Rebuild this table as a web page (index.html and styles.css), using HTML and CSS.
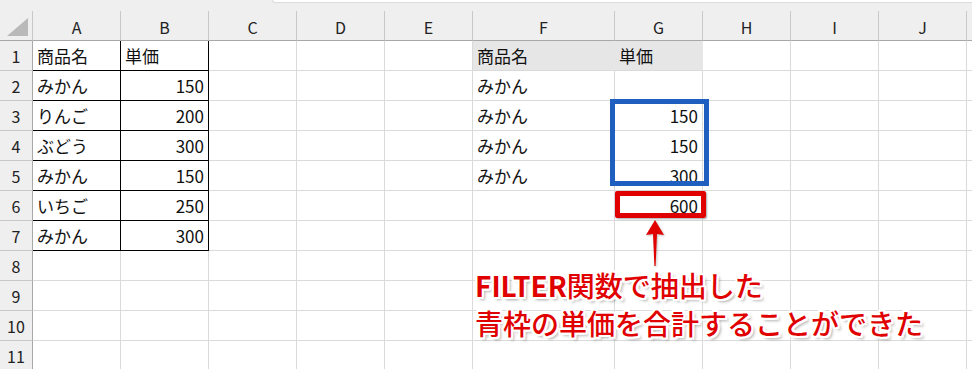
FILE: index.html
```html
<!DOCTYPE html>
<html lang="ja">
<head>
<meta charset="utf-8">
<title>FILTER</title>
<link rel="stylesheet" href="styles.css">
</head>
<body>
<div class="sheet">
  <div class="topbar"><div class="spacer"></div><div class="tab"></div></div>
  <div class="row head">
    <div class="corner"><span class="tri"></span></div>
    <div class="ch">A</div><div class="ch">B</div><div class="ch">C</div><div class="ch">D</div><div class="ch">E</div><div class="ch">F</div><div class="ch">G</div><div class="ch">H</div><div class="ch">I</div><div class="ch">J</div><div class="ch rest"></div>
  </div>
  <div class="row">
    <div class="rh">1</div>
    <div class="c t">商品名</div><div class="c t">単価</div><div class="c"></div><div class="c"></div><div class="c"></div><div class="c g">商品名</div><div class="c g">単価</div><div class="c"></div><div class="c"></div><div class="c"></div><div class="c"></div>
  </div>
  <div class="row">
    <div class="rh">2</div>
    <div class="c t">みかん</div><div class="c t n">150</div><div class="c"></div><div class="c"></div><div class="c"></div><div class="c">みかん</div><div class="c"></div><div class="c"></div><div class="c"></div><div class="c"></div><div class="c"></div>
  </div>
  <div class="row">
    <div class="rh">3</div>
    <div class="c t">りんご</div><div class="c t n">200</div><div class="c"></div><div class="c"></div><div class="c"></div><div class="c">みかん</div><div class="c n">150</div><div class="c"></div><div class="c"></div><div class="c"></div><div class="c"></div>
  </div>
  <div class="row">
    <div class="rh">4</div>
    <div class="c t">ぶどう</div><div class="c t n">300</div><div class="c"></div><div class="c"></div><div class="c"></div><div class="c">みかん</div><div class="c n">150</div><div class="c"></div><div class="c"></div><div class="c"></div><div class="c"></div>
  </div>
  <div class="row">
    <div class="rh">5</div>
    <div class="c t">みかん</div><div class="c t n">150</div><div class="c"></div><div class="c"></div><div class="c"></div><div class="c">みかん</div><div class="c n">300</div><div class="c"></div><div class="c"></div><div class="c"></div><div class="c"></div>
  </div>
  <div class="row">
    <div class="rh">6</div>
    <div class="c t">いちご</div><div class="c t n">250</div><div class="c"></div><div class="c"></div><div class="c"></div><div class="c"></div><div class="c n">600</div><div class="c"></div><div class="c"></div><div class="c"></div><div class="c"></div>
  </div>
  <div class="row">
    <div class="rh">7</div>
    <div class="c t">みかん</div><div class="c t n">300</div><div class="c"></div><div class="c"></div><div class="c"></div><div class="c"></div><div class="c"></div><div class="c"></div><div class="c"></div><div class="c"></div><div class="c"></div>
  </div>
  <div class="row">
    <div class="rh">8</div>
    <div class="c"></div><div class="c"></div><div class="c"></div><div class="c"></div><div class="c"></div><div class="c"></div><div class="c"></div><div class="c"></div><div class="c"></div><div class="c"></div><div class="c"></div>
  </div>
  <div class="row">
    <div class="rh">9</div>
    <div class="c"></div><div class="c"></div><div class="c"></div><div class="c"></div><div class="c"></div><div class="c"></div><div class="c"></div><div class="c"></div><div class="c"></div><div class="c"></div><div class="c"></div>
  </div>
  <div class="row">
    <div class="rh">10</div>
    <div class="c"></div><div class="c"></div><div class="c"></div><div class="c"></div><div class="c"></div><div class="c"></div><div class="c"></div><div class="c"></div><div class="c"></div><div class="c"></div><div class="c"></div>
  </div>
  <div class="row">
    <div class="rh">11</div>
    <div class="c"></div><div class="c"></div><div class="c"></div><div class="c"></div><div class="c"></div><div class="c"></div><div class="c"></div><div class="c"></div><div class="c"></div><div class="c"></div><div class="c"></div>
  </div>

  <div class="box-blue"></div>
  <div class="box-red"></div>
  <svg class="arrow" width="24" height="50" viewBox="0 0 24 50">
    <path d="M12 0 L21 15 L14 14 L12.6 46 L11.4 46 L10 14 L3 15 Z" fill="#e00000"/>
  </svg>
  <div class="note">
    <div class="line"><span class="en">FILTER</span>関数で抽出した</div>
    <div class="line">青枠の単価を合計することができた</div>
  </div>
</div>
</body>
</html>
```
FILE: styles.css
```css
* { box-sizing: border-box; }
html, body { margin: 0; padding: 0; }
body {
  background: #ffffff;
  font-family: "Noto Sans CJK JP", "Noto Sans", sans-serif;
  color: #111;
  overflow: hidden;
}
.sheet {
  position: relative;
  width: 972px;
  height: 369px;
  overflow: hidden;
}
.topbar {
  display: flex;
  height: 11px;
  background: #efefef;
}
.topbar .spacer { width: 272px; }
.topbar .tab {
  flex: 1;
  height: 3px;
  background: #ffffff;
  border: 1px solid #dcdcdc;
  border-top: none;
  border-right: none;
  border-bottom-left-radius: 4px;
}
.row {
  display: grid;
  grid-template-columns: 33px 88px 88px 88px 88px 88px 142px 88px 88px 88px 88px 1fr;
  height: 30px;
}
.head { background: #efefef; }
.corner {
  position: relative;
  border-right: 1px solid #c8c8c8;
  border-bottom: 1px solid #a8a8a8;
}
.tri {
  position: absolute;
  right: 4px;
  bottom: 4px;
  width: 0;
  height: 0;
  border-left: 21px solid transparent;
  border-bottom: 18px solid #b9b9b9;
}
.ch {
  border-right: 1px solid #c8c8c8;
  border-bottom: 1px solid #a8a8a8;
  font-size: 16px;
  color: #222;
  display: flex;
  align-items: center;
  justify-content: center;
  padding-top: 3px;
}
.ch.rest { border-right: none; }
.rh {
  background: #efefef;
  border-right: 1px solid #a8a8a8;
  border-bottom: 1px solid #c8c8c8;
  font-size: 16px;
  color: #222;
  display: flex;
  align-items: center;
  justify-content: center;
  padding-top: 1px;
}
.c {
  border-right: 1px solid #dadada;
  border-bottom: 1px solid #dadada;
  font-size: 17px;
  display: flex;
  align-items: center;
  padding: 0 4px 1px 4px;
  white-space: nowrap;
}
.c.t {
  border-right-color: #000;
  border-bottom-color: #000;
}
.c.n { justify-content: flex-end; padding-right: 4px; }
.c.g { background: #e6e6e6; border-right-color: #e6e6e6; }
.box-blue {
  position: absolute;
  left: 610px;
  top: 99px;
  width: 99px;
  height: 87px;
  border: 5px solid #1f5fbf;
}
.box-red {
  position: absolute;
  left: 615px;
  top: 191px;
  width: 91px;
  height: 27px;
  border: 5px solid #e00000;
  border-radius: 2px;
  box-shadow: 1px 1px 2px rgba(0,0,0,0.35);
}
.arrow {
  position: absolute;
  left: 643px;
  top: 220px;
  filter: drop-shadow(1px 1px 1px rgba(0,0,0,0.25));
}
.note {
  position: absolute;
  left: 475px;
  top: 266px;
  color: #e00000;
  font-size: 28px;
  line-height: 38px;
  font-weight: 500;
  white-space: nowrap;
  text-shadow:
    -2px 0 0 #fff, 2px 0 0 #fff, 0 -2px 0 #fff, 0 2px 0 #fff,
    -2px -2px 0 #fff, 2px 2px 0 #fff, -2px 2px 0 #fff, 2px -2px 0 #fff,
    3px 3px 3px rgba(0,0,0,0.35);
}
.note .en { font-weight: 700; }
```
